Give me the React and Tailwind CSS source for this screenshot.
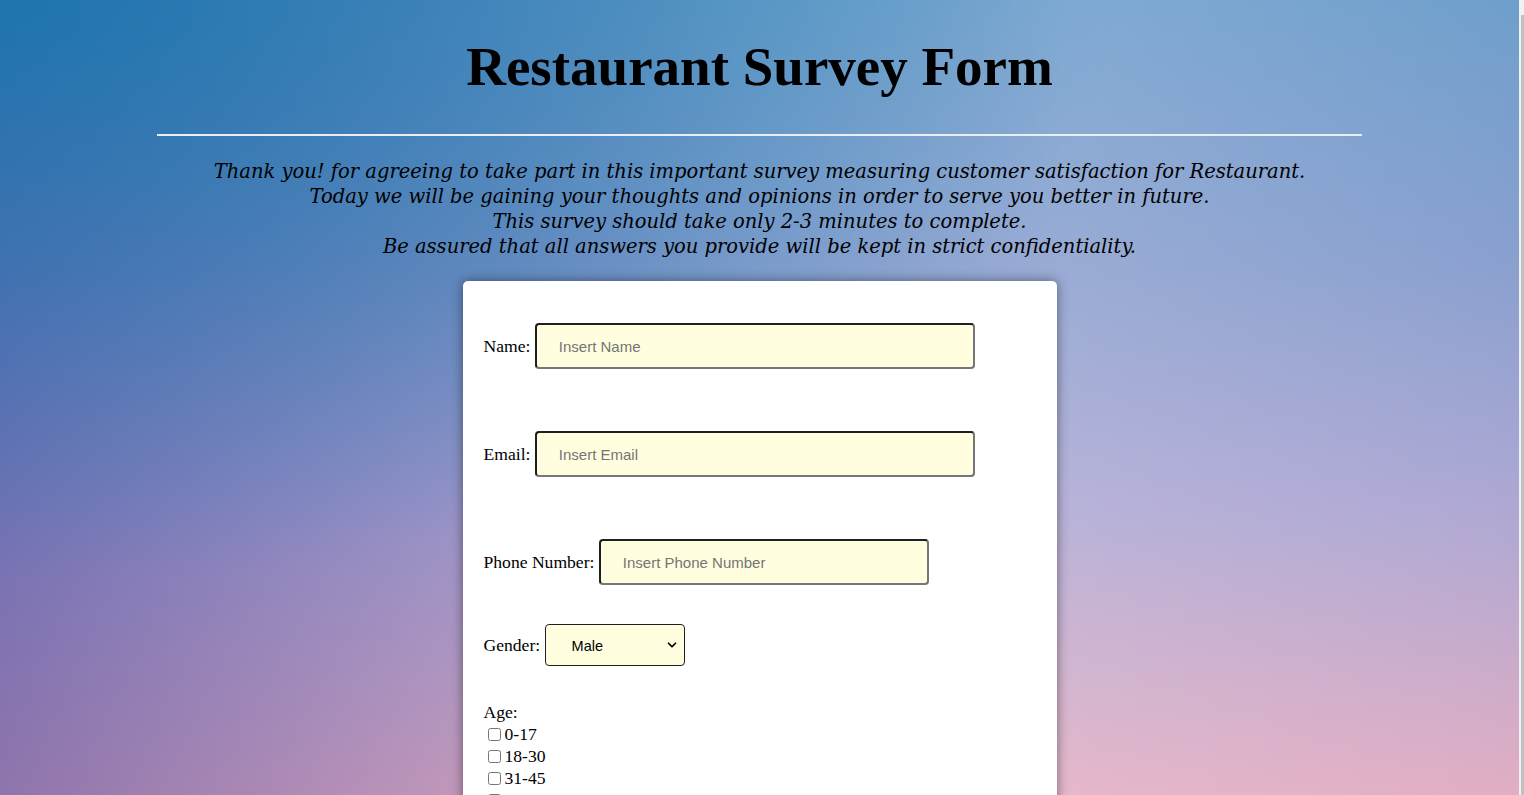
import React from 'react';
import { ChevronDown } from 'lucide-react';

const pageBg =
  'bg-[image:radial-gradient(ellipse_at_0%_0%,rgba(0,120,172,0.65)_0%,rgba(0,120,172,0)_52%),linear-gradient(to_right,rgba(60,60,150,0.5)_0%,rgba(60,60,150,0)_50%,rgba(255,255,255,0.12)_70%,rgba(255,255,255,0)_100%),linear-gradient(to_bottom,#6f9fcc_0%,#8aa0cf_33%,#ada8d4_63%,#e2aec3_100%)]';

const inputCls =
  'h-[46px] rounded-[4px] border-2 border-t-[#1f1f1f] border-l-[#1f1f1f] border-r-[#767676] border-b-[#767676] bg-[#ffffe0] pl-[22px] font-["Liberation_Sans",Arial,sans-serif] text-[15px] text-black outline-none placeholder:text-[#757575]';

const ages = ['0-17', '18-30', '31-45', '46-60', '60+'];

function Field({ label, placeholder, width, type = 'text' }) {
  return (
    <div className="flex items-center gap-[4.4px]">
      <label>{label}</label>
      <input type={type} placeholder={placeholder} className={`${inputCls} ${width}`} />
    </div>
  );
}

export default function App() {
  return (
    <div className="flex h-[795px] w-full overflow-hidden">
      <main className={`flex-1 ${pageBg} font-['Liberation_Serif','Times_New_Roman',serif] text-black`}>
        <h1 className="pt-[35px] text-center text-[55px] font-bold leading-[63px]">
          Restaurant Survey Form
        </h1>
        <hr className="mx-auto mt-[36px] w-[1205px] border-0 border-t-2 border-[#e9edf5]" />

        <p className="mt-[23px] text-center font-['DejaVu_Serif',Georgia,serif] text-[19.5px] italic leading-[25px]">
          Thank you! for agreeing to take part in this important survey measuring customer satisfaction for Restaurant.
          <br />
          Today we will be gaining your thoughts and opinions in order to serve you better in future.
          <br />
          This survey should take only 2-3 minutes to complete.
          <br />
          Be assured that all answers you provide will be kept in strict confidentiality.
        </p>

        <form className="mx-auto mt-[22px] w-[594px] rounded-[5px] bg-white px-[21px] pt-[42px] pb-10 text-[17.6px] shadow-[0_0_12px_rgba(0,0,0,0.45)]">
          <Field label="Name:" placeholder="Insert Name" width="w-[440px]" />
          <div className="mt-[62px]">
            <Field label="Email:" placeholder="Insert Email" width="w-[440px]" type="email" />
          </div>
          <div className="mt-[62px]">
            <Field label="Phone Number:" placeholder="Insert Phone Number" width="w-[330px]" type="tel" />
          </div>

          <div className="mt-[39px] flex items-center gap-[4.4px]">
            <label>Gender:</label>
            <div className="relative">
              <select className="h-[42px] w-[140px] appearance-none rounded-[4px] border border-[#1f1f1f] bg-[#ffffe0] pl-[26px] pt-[3px] font-['Liberation_Sans',Arial,sans-serif] text-[14.5px] text-black outline-none">
                <option>Male</option>
                <option>Female</option>
                <option>Other</option>
              </select>
              <ChevronDown
                className="pointer-events-none absolute right-[6px] top-1/2 h-[14px] w-[14px] -translate-y-1/2"
                strokeWidth={3}
              />
            </div>
          </div>

          <div className="mt-[36px] leading-[20px]">
            <div>Age:</div>
            <div className="mt-[1px]">
              {ages.map((age) => (
                <label key={age} className="flex h-[22px] items-center">
                  <input type="checkbox" className="ml-[4px] mr-[4px] h-[13px] w-[13px]" />
                  {age}
                </label>
              ))}
            </div>
          </div>
        </form>
      </main>

      <div className="flex w-[5px] bg-[#f1f1f1]">
        <div className="ml-auto mt-[15px] w-[3px] bg-[#c1c1c1]" />
      </div>
    </div>
  );
}
